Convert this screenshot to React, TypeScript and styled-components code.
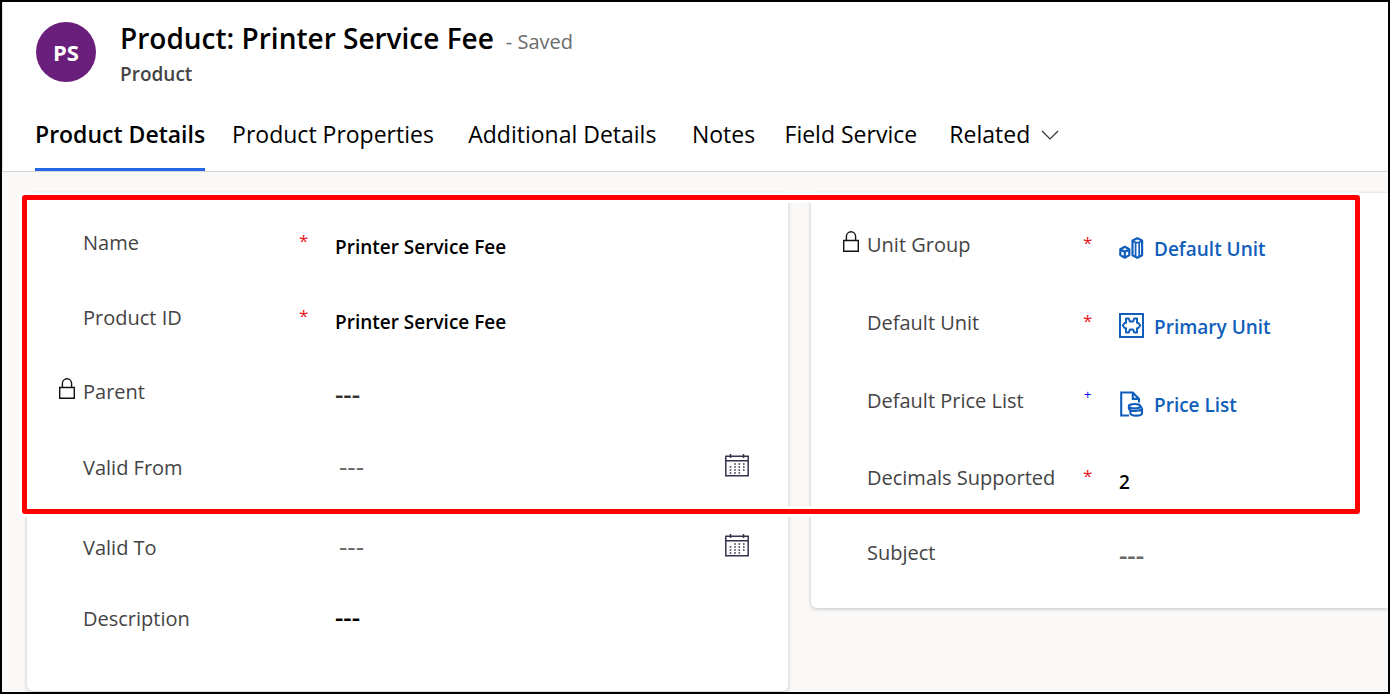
import React from 'react';
import styled, { createGlobalStyle, css } from 'styled-components';

const GlobalStyle = createGlobalStyle`
  *, *::before, *::after { box-sizing: border-box; }
  body { margin: 0; background: #faf9f8; }
  body, input, button { font-family: "Open Sans", "Noto Sans", sans-serif; }
`;

const Page = styled.div`
  display: flex;
  flex-direction: column;
  min-height: 100vh;
  border: 2px solid #000;
  background: #faf9f8;
  overflow: hidden;
`;

const Header = styled.header`
  background: #fff;
  border-bottom: 1px solid #d6d6d6;
  border-left: 1px solid #e1e1e1;
`;

const Identity = styled.div`
  display: flex;
  align-items: flex-start;
  gap: 24px;
  padding: 20px 33px 0;
`;

const Avatar = styled.div`
  display: grid;
  place-items: center;
  flex: none;
  width: 60px;
  height: 60px;
  border-radius: 50%;
  background: #6b1f7c;
  color: #fff;
  font-size: 22px;
  font-weight: 700;
`;

const TitleLine = styled.div`
  display: flex;
  align-items: baseline;
  gap: 12px;
  line-height: 32px;
`;

const Title = styled.h1`
  margin: 0;
  font-size: 28px;
  font-weight: 600;
  color: #000;
`;

const SaveState = styled.span`
  font-size: 20px;
  color: #6b6b6b;
`;

const EntityName = styled.div`
  font-size: 19px;
  font-weight: 600;
  line-height: 32px;
  color: #444;
`;

const TabList = styled.nav`
  display: flex;
  gap: 27px;
  padding: 19px 32px 0;
`;

/* The hidden bold copy keeps a tab's width the same when it becomes selected. */
const Tab = styled.button<{ $selected?: boolean }>`
  display: flex;
  align-items: flex-start;
  gap: 7px;
  height: 62px;
  padding: 9px 0 0;
  border: 0;
  border-bottom: 3px solid ${p => (p.$selected ? '#2266e3' : 'transparent')};
  background: none;
  color: #000;
  font-size: 23px;
  font-weight: ${p => (p.$selected ? 600 : 400)};
  line-height: 32px;
  white-space: nowrap;
`;

const TabText = styled.span`
  display: grid;
  justify-items: start;
  &::after {
    content: attr(data-label);
    height: 0;
    font-weight: 600;
    visibility: hidden;
    overflow: hidden;
  }
`;

const TabChevron = styled.svg`
  margin-top: 12px;
`;

const Body = styled.main`
  position: relative;
  flex: 1;
  display: grid;
  grid-template-columns: minmax(0, 761fr) minmax(0, 577fr);
  align-items: start;
  gap: 23px;
  padding: 21px 0 0 25px;
`;

const Card = styled.section<{ $side: 'left' | 'right' }>`
  background: #fff;
  box-shadow: 0 1px 4px rgba(0, 0, 0, 0.22);
  ${p =>
    p.$side === 'left'
      ? css`
          padding: 36px 39px 0 31px;
          border-radius: 6px;
        `
      : css`
          padding: 38px 39px 0 31px;
          border-radius: 6px 0 0 6px;
        `}
`;

const Row = styled.div<{ $height: number }>`
  display: grid;
  grid-template-columns: 25px 216px 36px minmax(0, 1fr) auto;
  align-items: start;
  height: ${p => p.$height}px;
  line-height: 28px;
  font-size: 20px;
`;

const LockSlot = styled.span`
  display: flex;
`;

const Label = styled.label`
  color: #444;
  white-space: nowrap;
`;

const Marker = styled.span<{ $kind: 'required' | 'recommended' }>`
  padding-left: ${p => (p.$kind === 'required' ? 0 : 1)}px;
  color: ${p => (p.$kind === 'required' ? '#e81123' : '#0000ff')};
  font-size: ${p => (p.$kind === 'required' ? 17 : 13)}px;
  line-height: ${p => (p.$kind === 'required' ? 24 : 14)}px;
`;

type Tone = 'strong' | 'muted' | 'date' | 'dark' | 'note';

const toneColor: Record<Tone, string> = {
  strong: '#000',
  note: '#000',
  dark: '#333',
  muted: '#666',
  date: '#666',
};

const ValueInput = styled.input<{ $tone: Tone; $empty: boolean }>`
  width: 100%;
  height: 28px;
  margin-top: ${p => (p.$tone === 'date' || p.$tone === 'note' ? 0 : 4)}px;
  padding: 0 0 ${p => (p.$empty ? 4 : 0)}px ${p => (p.$tone === 'date' ? 4 : 0)}px;
  border: 0;
  outline: 0;
  background: none;
  font-size: ${p => (p.$empty ? 26 : 19)}px;
  line-height: 24px;
  font-weight: ${p => (p.$tone === 'date' ? 400 : 600)};
  color: ${p => toneColor[p.$tone]};
`;

const LookupLink = styled.a`
  display: flex;
  align-items: flex-start;
  gap: 10px;
  height: 28px;
  margin-top: 4px;
  color: #115ebb;
  font-size: 19px;
  font-weight: 600;
  text-decoration: none;
  white-space: nowrap;
`;

const CalendarButton = styled.button`
  display: flex;
  padding: 0;
  border: 0;
  background: none;
`;

const Highlight = styled.div`
  position: absolute;
  top: 23px;
  left: 20px;
  right: 28px;
  height: 319px;
  border: 5px solid #f00;
  border-radius: 3px;
  box-shadow: 0 0 0 3px #fff, inset 0 0 0 3px #fff;
  pointer-events: none;
`;

const LockIcon = () => (
  <svg width="18" height="22" viewBox="0 0 18 22" fill="none" stroke="#111" strokeWidth="1.4">
    <path d="M1.7 9.5h14.6v10.8H1.7zM4.4 9.5V5.4a4.6 4.6 0 0 1 9.2 0v4.1" />
  </svg>
);

const CalendarIcon = () => (
  <svg width="24" height="23" viewBox="0 0 24 23" fill="none" stroke="#33334d">
    <path strokeWidth="1.5" d="M.8 2.2h22.4v19.6H.8zM.8 6.8h22.4M5.5 0v4M18.5 0v4" />
    <path strokeWidth="1.6" strokeDasharray="1.6 1.4" d="M5.5 12.2v7.6M10 9.2v10.6M14.3 9.2v10.6M18.8 9.2v7.6" />
  </svg>
);

const UnitGroupIcon = () => (
  <svg width="25" height="25" viewBox="0 -2 25 25" fill="none" stroke="#115ebb" strokeWidth="2.2" strokeLinejoin="round">
    <path d="M5.8 9.8l4.5 2.4v5.9l-4.5 2.6-4.5-2.6v-5.9zM1.3 12.4l4.5 2.3 4.5-2.3M5.8 14.7v6" />
    <path d="M18.3 1.2l4.8 2.3v14.8l-4.8 2.5-4.8-2.5V3.5z" />
    <path strokeWidth="1.7" d="M13.5 3.8l3 1.8h3.6l3-1.8M16.6 5.6v14M20.2 5.6v14" />
  </svg>
);

const UnitIcon = () => (
  <svg width="25" height="25" viewBox="0 0 25 25" fill="none" stroke="#115ebb" strokeWidth="2">
    <path d="M1 1h23v23H1z" />
    <path
      strokeWidth="2"
      strokeLinejoin="round"
      d="M7 5.6h2.8l1.2 3h3l1.2-3H18v4.2l1.4.2 1.8 2.5-1.8 2.5-1.4.2v4.2h-2.8l-1.2-3h-3l-1.2 3H7v-4.2l-1.4-.2-1.8-2.5L5.6 10 7 9.8z"
    />
  </svg>
);

const PriceListIcon = () => (
  <svg width="25" height="26" viewBox="0 0 25 26" fill="none" stroke="#115ebb" strokeWidth="2.1">
    <path d="M10 24.5H2.2V1.5h11.6l6.2 6.4v3.6M13.8 1.8v6.1h6" />
    <ellipse cx="15.6" cy="15.2" rx="5.8" ry="2.2" />
    <path d="M9.9 15.4v2.2c0 1.5 2.8 2.5 6.6 2.3 3.8-.1 6.4-1 6.4-2.3 0-.8-.7-1.4-1.6-1.8M11.4 19.4v2.8c0 1.4 2.6 2.4 5.8 2.4s5.8-1 5.8-2.4v-4.6" />
  </svg>
);

type Field = {
  id: string;
  label: string;
  height: number;
  locked?: boolean;
  marker?: 'required' | 'recommended';
  value: string;
  tone?: Tone;
  icon?: React.ReactNode;
};

const leftFields: Field[] = [
  { id: 'name', label: 'Name', height: 75, marker: 'required', value: 'Printer Service Fee' },
  { id: 'product-id', label: 'Product ID', height: 74, marker: 'required', value: 'Printer Service Fee' },
  { id: 'parent', label: 'Parent', height: 76, locked: true, value: '---', tone: 'dark' },
  { id: 'valid-from', label: 'Valid From', height: 80, value: '---', tone: 'date' },
  { id: 'valid-to', label: 'Valid To', height: 71, value: '---', tone: 'date' },
  { id: 'description', label: 'Description', height: 86, value: '---', tone: 'note' },
];

const rightFields: Field[] = [
  { id: 'unit-group', label: 'Unit Group', height: 78, locked: true, marker: 'required', value: 'Default Unit', icon: <UnitGroupIcon /> },
  { id: 'default-unit', label: 'Default Unit', height: 78, marker: 'required', value: 'Primary Unit', icon: <UnitIcon /> },
  { id: 'price-list', label: 'Default Price List', height: 77, marker: 'recommended', value: 'Price List', icon: <PriceListIcon /> },
  { id: 'decimals', label: 'Decimals Supported', height: 75, marker: 'required', value: '2' },
  { id: 'subject', label: 'Subject', height: 69, value: '---', tone: 'muted' },
];

const FieldRow = ({ field }: { field: Field }) => (
  <Row $height={field.height}>
    <LockSlot>{field.locked && <LockIcon />}</LockSlot>
    <Label htmlFor={field.id}>{field.label}</Label>
    {field.marker ? (
      <Marker $kind={field.marker}>{field.marker === 'required' ? '*' : '+'}</Marker>
    ) : (
      <span />
    )}
    {field.icon ? (
      <LookupLink id={field.id} href="#">
        {field.icon}
        {field.value}
      </LookupLink>
    ) : (
      <ValueInput
        id={field.id}
        $tone={field.tone ?? 'strong'}
        $empty={field.value === '---'}
        defaultValue={field.value}
        readOnly={field.locked}
      />
    )}
    {field.tone === 'date' && (
      <CalendarButton type="button" aria-label={`Choose ${field.label}`}>
        <CalendarIcon />
      </CalendarButton>
    )}
  </Row>
);

const tabs = ['Product Details', 'Product Properties', 'Additional Details', 'Notes', 'Field Service', 'Related'];

export default function App() {
  return (
    <>
      <GlobalStyle />
      <Page>
        <Header>
          <Identity>
            <Avatar>PS</Avatar>
            <div>
              <TitleLine>
                <Title>Product: Printer Service Fee</Title>
                <SaveState>- Saved</SaveState>
              </TitleLine>
              <EntityName>Product</EntityName>
            </div>
          </Identity>
          <TabList>
            {tabs.map((tab, i) => (
              <Tab key={tab} type="button" $selected={i === 0}>
                <TabText data-label={tab}>{tab}</TabText>
                {tab === 'Related' && (
                  <TabChevron width="18" height="11" viewBox="0 0 18 11" fill="none" stroke="#333" strokeWidth="1.2">
                    <path d="M1 1l8 8 8-8" />
                  </TabChevron>
                )}
              </Tab>
            ))}
          </TabList>
        </Header>
        <Body>
          <Card $side="left">
            {leftFields.map(f => (
              <FieldRow key={f.id} field={f} />
            ))}
          </Card>
          <Card $side="right">
            {rightFields.map(f => (
              <FieldRow key={f.id} field={f} />
            ))}
          </Card>
          <Highlight />
        </Body>
      </Page>
    </>
  );
}
